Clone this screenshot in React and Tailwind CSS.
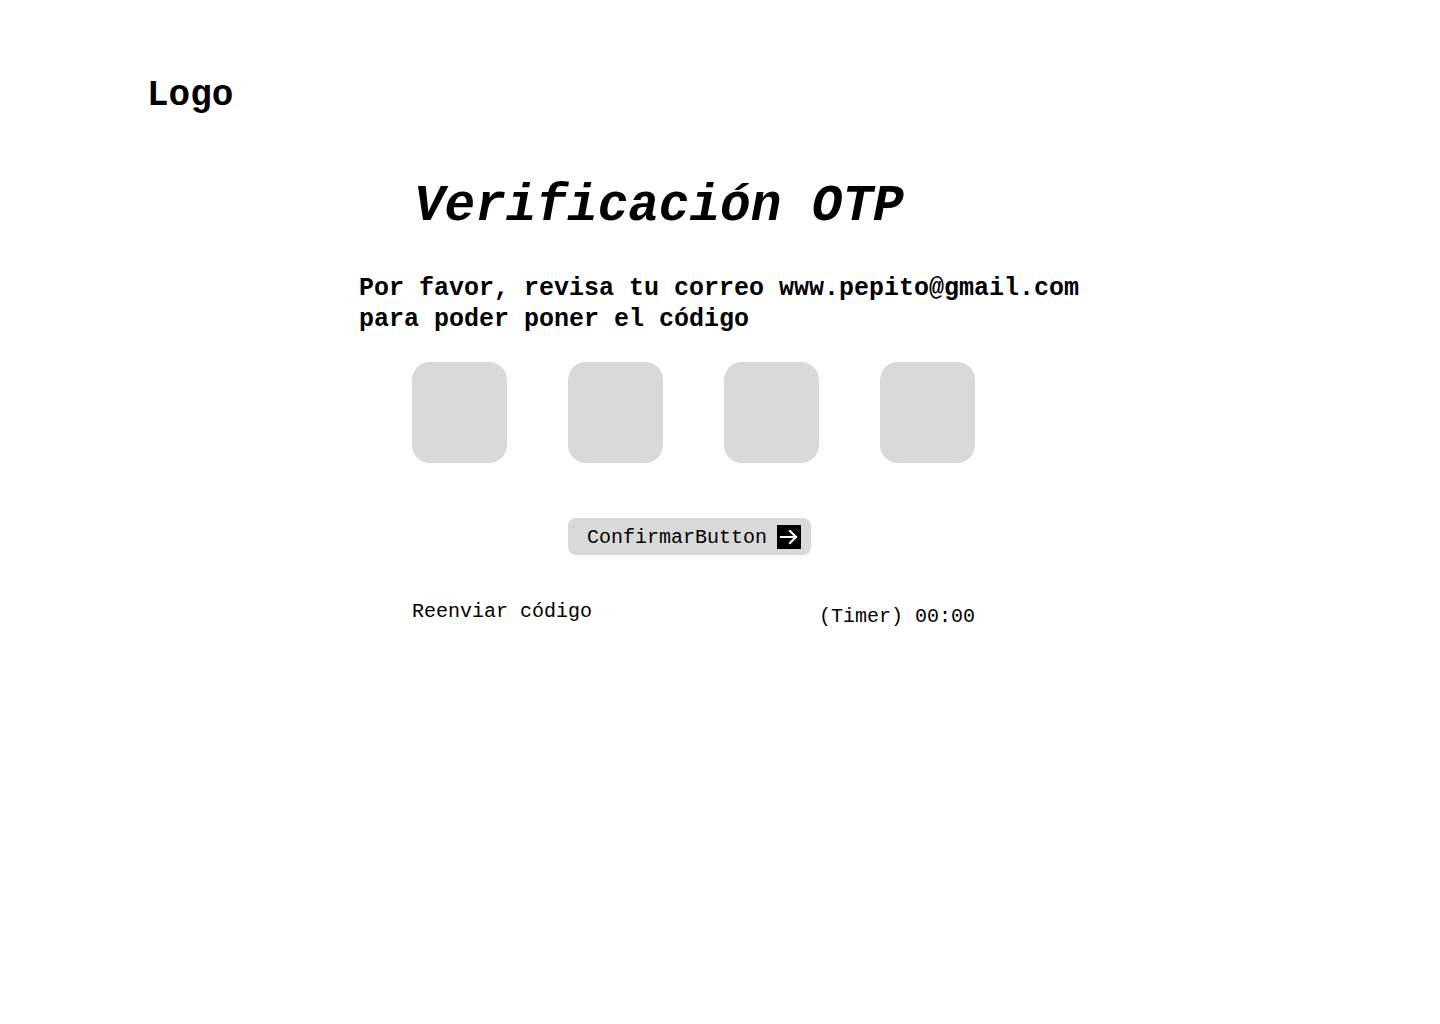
const mono = { fontFamily: '"Liberation Mono", "DejaVu Sans Mono", monospace' };

function ArrowBox() {
  return (
    <svg width="24" height="24" viewBox="0 0 24 24" className="shrink-0">
      <rect width="24" height="24" fill="#000" />
      <path d="M4 12h15M13 6l6 6-6 6" stroke="#fff" strokeWidth="2.2" fill="none" strokeLinecap="square" />
    </svg>
  );
}

export default function App() {
  const boxes = [0, 1, 2, 3];

  return (
    <div className="min-h-[1024px] w-[1440px] bg-white text-black" style={mono}>
      <header className="pl-[147px] pt-[74px]">
        <p className="text-[36px] font-bold leading-[44px]">Logo</p>
      </header>

      <main className="flex flex-col">
        <h1 className="ml-[414px] mt-[59px] text-[51px] font-bold italic leading-[60px]">
          Verificación OTP
        </h1>

        <p className="ml-[359px] mt-[36px] text-[25px] font-bold leading-[31px]">
          Por favor, revisa tu correo www.pepito@gmail.com
          <br />
          para poder poner el código
        </p>

        <div className="ml-[412px] mt-[27px] flex gap-[61px]">
          {boxes.map((i) => (
            <input
              key={i}
              maxLength={1}
              aria-label={`Dígito ${i + 1}`}
              className="h-[101px] w-[95px] rounded-[18px] bg-[#d9d9d9] text-center text-[40px] outline-none"
            />
          ))}
        </div>

        <button className="ml-[568px] mt-[55px] flex h-[37px] w-[243px] items-center gap-[10px] rounded-[8px] bg-[#d9d9d9] pl-[19px] text-[20px] leading-[24px]">
          <span className="pt-[3px]">ConfirmarButton</span>
          <ArrowBox />
        </button>

        <div className="ml-[412px] mt-[45px] flex w-[563px] items-start justify-between text-[20px] leading-[24px]">
          <span>Reenviar código</span>
          <span className="mt-[5px]">(Timer) 00:00</span>
        </div>
      </main>
    </div>
  );
}
